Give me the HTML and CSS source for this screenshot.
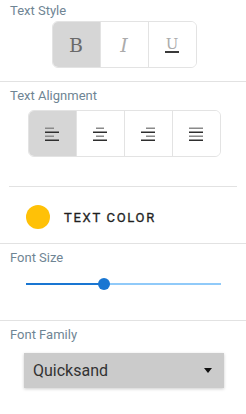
FILE: index.html
```html
<!DOCTYPE html>
<html lang="en">
<head>
  <meta charset="UTF-8" />
  <meta name="viewport" content="width=device-width, initial-scale=1" />
  <title>Text Settings</title>
  <link rel="stylesheet" href="styles.css">
</head>
<body>

  <div class="panel">

    <section class="section first">
      <div class="label">Text Style</div>
      <div class="group-row">
        <div class="btn-group">
          <div class="btn active"><span class="glyph bold">B</span></div>
          <div class="btn"><span class="glyph italic">I</span></div>
          <div class="btn"><span class="glyph under">U</span></div>
        </div>
      </div>
    </section>

    <section class="section align">
      <div class="label">Text Alignment</div>
      <div class="group-row">
        <div class="btn-group">
          <div class="btn active">
            <svg width="14" height="14" viewBox="0 0 14 14">
              <rect class="lt" x="0" y="0.5" width="9" height="1.5" />
              <rect class="dk" x="0" y="4.5" width="14" height="1.5" />
              <rect class="lt" x="0" y="8.5" width="9" height="1.5" />
              <rect class="dk" x="0" y="12.5" width="14" height="1.5" />
            </svg>
          </div>
          <div class="btn">
            <svg width="14" height="14" viewBox="0 0 14 14">
              <rect class="lt" x="3" y="0.5" width="8" height="1.5" />
              <rect class="dk" x="0" y="4.5" width="14" height="1.5" />
              <rect class="lt" x="3" y="8.5" width="8" height="1.5" />
              <rect class="dk" x="0" y="12.5" width="14" height="1.5" />
            </svg>
          </div>
          <div class="btn">
            <svg width="14" height="14" viewBox="0 0 14 14">
              <rect class="lt" x="5" y="0.5" width="9" height="1.5" />
              <rect class="dk" x="0" y="4.5" width="14" height="1.5" />
              <rect class="lt" x="5" y="8.5" width="9" height="1.5" />
              <rect class="dk" x="0" y="12.5" width="14" height="1.5" />
            </svg>
          </div>
          <div class="btn">
            <svg width="14" height="14" viewBox="0 0 14 14">
              <rect class="lt" x="0" y="0.5" width="14" height="1.5" />
              <rect class="dk" x="0" y="4.5" width="14" height="1.5" />
              <rect class="lt" x="0" y="8.5" width="14" height="1.5" />
              <rect class="dk" x="0" y="12.5" width="14" height="1.5" />
            </svg>
          </div>
        </div>
      </div>
    </section>

    <section class="section color-row">
      <span class="swatch"></span>
      <span class="color-label">TEXT COLOR</span>
    </section>

    <section class="section">
      <div class="label">Font Size</div>
      <div class="slider">
        <div class="track">
          <div class="fill" style="width: 40%"></div>
          <div class="thumb" style="left: 40%"></div>
        </div>
      </div>
    </section>

    <section class="section last">
      <div class="label">Font Family</div>
      <div class="select">
        <span>Quicksand</span>
        <span class="caret"></span>
      </div>
    </section>

  </div>

</body>
</html>
```

FILE: styles.css
```css
* {
  box-sizing: border-box;
}

html, body {
  margin: 0;
  padding: 0;
  background: #fff;
  font-family: Roboto, 'Liberation Sans', sans-serif;
  color: #333;
}

.panel {
  width: 246px;
}

/* each block: label on top, line below */
.section {
  padding: 6px 0 13px;
  border-bottom: 1px solid #e2e2e2;
}

.section.first {
  padding-top: 3px;
}

.label {
  padding-left: 10px;
  font-size: 13px;
  line-height: 16px;
  color: #6f8594;
}

.group-row {
  display: flex;
  justify-content: center;
  padding-left: 2px;
  margin-top: 2px;
}

.btn-group {
  display: flex;
  height: 47px;
  border: 1px solid #e3e3e3;
  border-radius: 6px;
  overflow: hidden;
}

.btn {
  width: 48px;
  display: flex;
  align-items: center;
  justify-content: center;
  border-left: 1px solid #e3e3e3;
  background: #fff;
}

.btn:first-child {
  width: 47px;
  border-left: none;
}

.btn.active {
  background: #d6d6d6;
}

.glyph {
  font-family: 'DejaVu Serif', 'Liberation Serif', serif;
  font-size: 19px;
  line-height: 20px;
  color: #ababab;
}

.glyph.bold {
  color: #6a6a6a;
  margin-top: 1px;
}

.glyph.italic {
  font-style: italic;
  margin-top: 1px;
}

.glyph.under {
  font-size: 15px;
  line-height: 13px;
  padding: 0 1px;
  border-bottom: 2px solid #3a3a3a;
  margin-top: 2px;
}

.btn .lt {
  fill: #8a8a8a;
}

.btn .dk {
  fill: #2e2e2e;
}

/* the line below alignment is inset, drawn on the colour row */
.align {
  padding-bottom: 29px;
  border-bottom: none;
}

.align .group-row {
  margin-top: 6px;
}

.color-row {
  display: flex;
  align-items: center;
  gap: 14px;
  padding: 19px 0 14px 26px;
  background: linear-gradient(#e2e2e2, #e2e2e2) 9px 0 / 228px 1px no-repeat;
}

.swatch {
  width: 24px;
  height: 24px;
  border-radius: 50%;
  background: #ffc107;
}

.color-label {
  font-size: 13px;
  letter-spacing: 1.7px;
  color: #1f1f1f;
  -webkit-text-stroke: 0.3px #1f1f1f;
}

.slider {
  display: flex;
  align-items: center;
  height: 12px;
  margin: 12px 0 17px;
  padding: 0 25px 0 26px;
}

.track {
  position: relative;
  width: 100%;
  height: 2px;
  background: #90caf9;
}

.fill {
  height: 2px;
  background: #1976d2;
}

.thumb {
  position: absolute;
  top: -5px;
  width: 12px;
  height: 12px;
  margin-left: -6px;
  border-radius: 50%;
  background: #1976d2;
}

.select {
  display: flex;
  align-items: center;
  justify-content: space-between;
  width: 200px;
  height: 35px;
  margin: 10px 0 0 24px;
  padding: 0 12px 0 9px;
  background: #cbcbcb;
  box-shadow: 0 1px 3px rgba(0, 0, 0, 0.2);
  font-size: 16px;
  color: #333;
}

.caret {
  width: 0;
  height: 0;
  border-left: 4px solid transparent;
  border-right: 4px solid transparent;
  border-top: 5px solid #111;
}

.last {
  border-bottom: none;
}
```
